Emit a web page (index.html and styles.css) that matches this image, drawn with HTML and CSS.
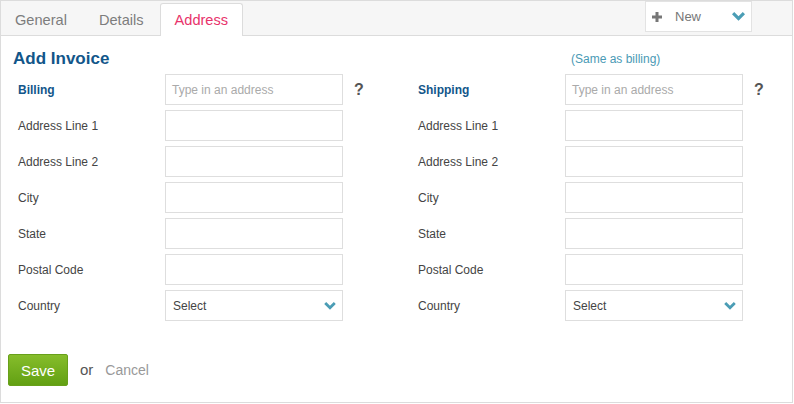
FILE: index.html
```html
<!DOCTYPE html>
<html>
<head>
<meta charset="utf-8">
<link rel="stylesheet" href="styles.css">
</head>
<body>
<div class="panel">
  <div class="header">
    <div class="tabs">
      <div class="tab t-general">General</div>
      <div class="tab t-details">Details</div>
      <div class="tab active">Address</div>
    </div>
    <div class="new-btn">
      <span class="plus">
        <svg width="10" height="10" viewBox="0 0 10 10"><path d="M3.5 0h3v3.5H10v3H6.5V10h-3V6.5H0v-3h3.5z" fill="#777"/></svg>
      </span>
      <span class="new-label">New</span>
      <span class="chev">
        <svg width="13" height="9" viewBox="0 0 13 9"><path d="M0 2.2L2.2 0l4.3 4.3L10.8 0 13 2.2 6.5 8.7z" fill="#4a9db5"/></svg>
      </span>
    </div>
  </div>
  <div class="content">
    <div class="title-row">
      <h1 class="title">Add Invoice</h1>
      <a class="same">(Same as billing)</a>
    </div>
    <div class="columns">
      <div class="col">
        <div class="row"><label class="lbl strong">Billing</label><div class="input ph">Type in an address</div><span class="help">?</span></div>
        <div class="row"><label class="lbl">Address Line 1</label><div class="input"></div></div>
        <div class="row"><label class="lbl">Address Line 2</label><div class="input"></div></div>
        <div class="row"><label class="lbl">City</label><div class="input"></div></div>
        <div class="row"><label class="lbl">State</label><div class="input"></div></div>
        <div class="row"><label class="lbl">Postal Code</label><div class="input"></div></div>
        <div class="row"><label class="lbl">Country</label><div class="input select"><span>Select</span><svg width="12" height="8" viewBox="0 0 13 9"><path d="M0 2.2L2.2 0l4.3 4.3L10.8 0 13 2.2 6.5 8.7z" fill="#4a9db5"/></svg></div></div>
      </div>
      <div class="col">
        <div class="row"><label class="lbl strong">Shipping</label><div class="input ph">Type in an address</div><span class="help">?</span></div>
        <div class="row"><label class="lbl">Address Line 1</label><div class="input"></div></div>
        <div class="row"><label class="lbl">Address Line 2</label><div class="input"></div></div>
        <div class="row"><label class="lbl">City</label><div class="input"></div></div>
        <div class="row"><label class="lbl">State</label><div class="input"></div></div>
        <div class="row"><label class="lbl">Postal Code</label><div class="input"></div></div>
        <div class="row"><label class="lbl">Country</label><div class="input select"><span>Select</span><svg width="12" height="8" viewBox="0 0 13 9"><path d="M0 2.2L2.2 0l4.3 4.3L10.8 0 13 2.2 6.5 8.7z" fill="#4a9db5"/></svg></div></div>
      </div>
    </div>
    <div class="actions">
      <button class="save">Save</button>
      <span class="or">or</span>
      <a class="cancel">Cancel</a>
    </div>
  </div>
</div>
</body>
</html>
```
FILE: styles.css
```css
* { box-sizing: border-box; }
html, body { margin: 0; padding: 0; background: #fff; }
body { font-family: "Liberation Sans", Arial, sans-serif; }
.panel {
  width: 793px;
  height: 403px;
  border: 1px solid #dcdcdc;
  background: #fff;
  overflow: hidden;
}
.header {
  height: 35px;
  background: #f6f6f6;
  border-bottom: 1px solid #dcdcdc;
  display: flex;
  justify-content: space-between;
  align-items: flex-start;
}
.tabs {
  display: flex;
  align-items: flex-end;
  height: 34px;
}
.tab {
  font-size: 14.6px;
  color: #7d7d7d;
  height: 32px;
  line-height: 34px;
}
.t-general { padding: 0 16px 0 14px; }
.t-details { padding: 0 15px 0 16px; }
.tab.active {
  margin-left: 1px;
  padding: 0 14px;
  background: #fff;
  color: #e8336b;
  border: 1px solid #dcdcdc;
  border-bottom: none;
  border-radius: 3px 3px 0 0;
  height: 33px;
  line-height: 33px;
  margin-bottom: -1px;
}
.new-btn {
  width: 107px;
  height: 31px;
  margin-right: 40px;
  background: #fff;
  border: 1px solid #e3e3e3;
  display: flex;
  align-items: center;
  padding: 0 6px;
}
.plus { display: flex; width: 10px; margin-right: 13px; }
.new-label { font-size: 13px; color: #777; flex: 1; }
.chev { display: flex; }
.content { padding: 0 0 0 12px; }
.title-row {
  display: flex;
  align-items: center;
  height: 38px;
  padding-top: 8px;
}
.title {
  margin: 0;
  font-size: 17px;
  font-weight: bold;
  color: #12568a;
  width: 558px;
  flex-shrink: 0;
}
.same {
  font-size: 12px;
  color: #4a9ab5;
}
.columns { display: flex; padding-left: 5px; }
.col { width: 400px; flex-shrink: 0; display: flex; flex-direction: column; gap: 5px; }
.row { display: flex; align-items: center; height: 31px; }
.lbl {
  width: 147px;
  flex-shrink: 0;
  font-size: 12px;
  color: #444;
}
.lbl.strong { font-weight: bold; color: #12568a; }
.input {
  width: 178px;
  flex-shrink: 0;
  height: 31px;
  border: 1px solid #dedede;
  background: #fff;
  font-size: 12px;
  display: flex;
  align-items: center;
  padding: 0 6px;
}
.input.ph { color: #aaa; }
.input.select { justify-content: space-between; color: #444; padding: 0 6px 0 7px; }
.help {
  margin-left: 11px;
  font-size: 16px;
  font-weight: bold;
  color: #555;
}
.actions {
  display: flex;
  align-items: center;
  margin-top: 33px;
  margin-left: -5px;
}
.save {
  width: 60px;
  height: 32px;
  border: 1px solid #68a01a;
  border-radius: 2px;
  background: linear-gradient(#86bd2b, #62a013);
  color: #fff;
  font-family: "Liberation Sans", Arial, sans-serif;
  font-size: 15px;
  padding: 0;
}
.or { margin-left: 12px; font-size: 15px; color: #555; position: relative; top: -1px; }
.cancel { margin-left: 12px; font-size: 14px; color: #999; }
```
